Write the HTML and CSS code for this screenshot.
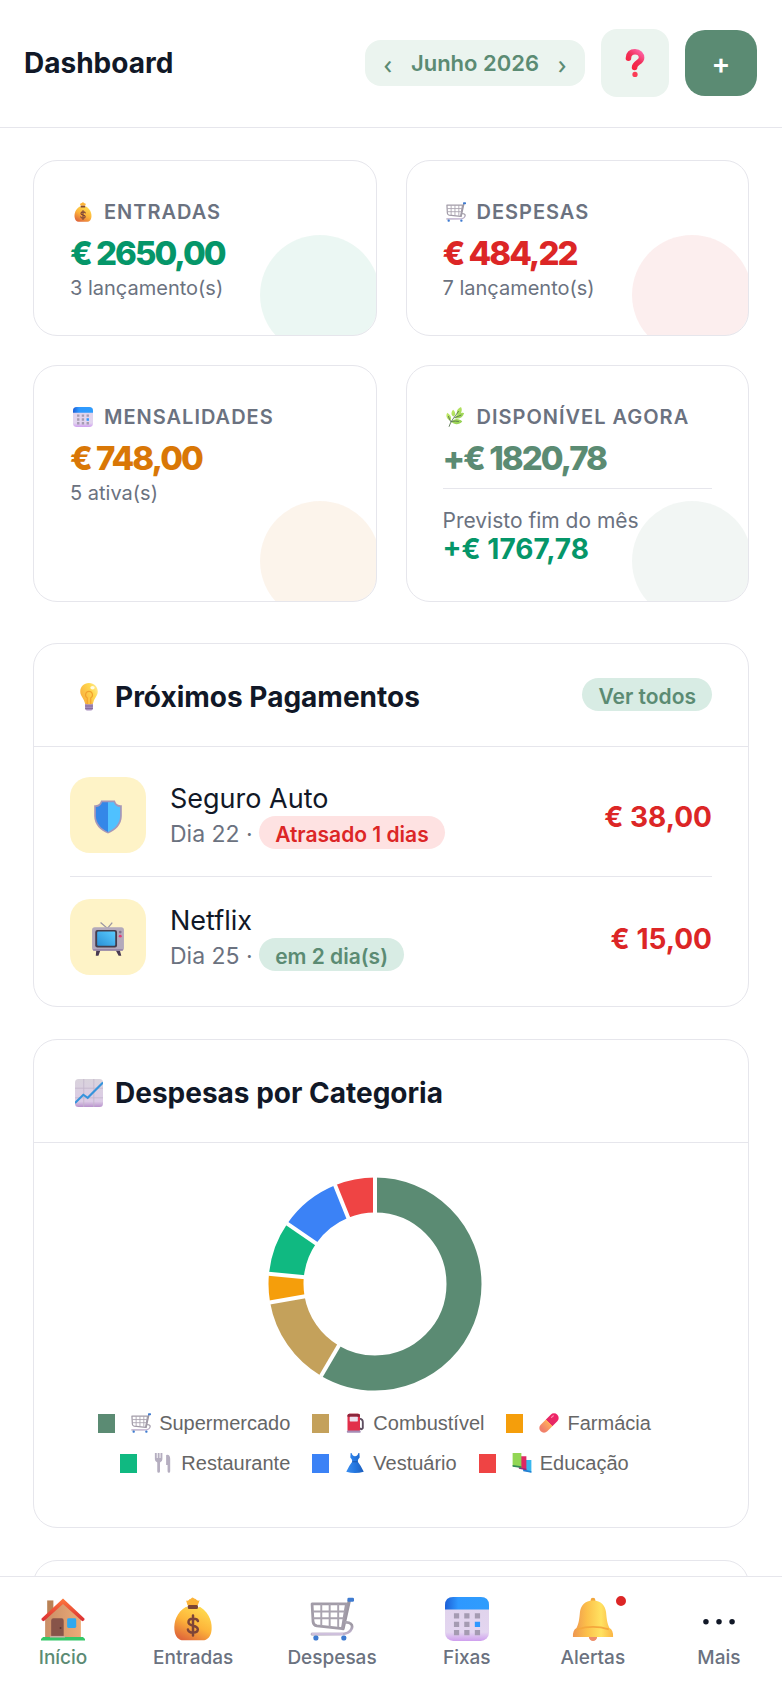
FILE: index.html
```html
<!DOCTYPE html>
<html lang="pt">
<head>
<meta charset="utf-8">
<meta name="viewport" content="width=device-width, initial-scale=1">
<title>Dashboard</title>
<link rel="stylesheet" href="styles.css">
</head>
<body>
<svg class="sprite" aria-hidden="true">
  <defs>
    <linearGradient id="g-gold" x1="0.8" y1="0.1" x2="0.3" y2="1"><stop offset="0" stop-color="#ffd84e"/><stop offset="0.5" stop-color="#fdb43a"/><stop offset="1" stop-color="#e0693a"/></linearGradient>
    <linearGradient id="g-bell" x1="0" y1="0" x2="1" y2="0"><stop offset="0" stop-color="#ee9650"/><stop offset="0.35" stop-color="#fcc04a"/><stop offset="0.7" stop-color="#ffe261"/><stop offset="1" stop-color="#fbb544"/></linearGradient>
    <linearGradient id="g-calhead" x1="0" y1="0" x2="1" y2="0"><stop offset="0" stop-color="#1d5fd6"/><stop offset="0.3" stop-color="#2e98ff"/><stop offset="1" stop-color="#2f9dfc"/></linearGradient>
    <linearGradient id="g-calbody" x1="0" y1="0" x2="0" y2="1"><stop offset="0" stop-color="#dfd3ea"/><stop offset="0.8" stop-color="#e3d5f0"/><stop offset="1" stop-color="#cf9fee"/></linearGradient>
    <linearGradient id="g-wall" x1="0" y1="0" x2="1" y2="0"><stop offset="0" stop-color="#c98e67"/><stop offset="1" stop-color="#ecab77"/></linearGradient>
    <linearGradient id="g-roof" x1="0" y1="0" x2="0" y2="1"><stop offset="0" stop-color="#ff7a3c"/><stop offset="1" stop-color="#da2c33"/></linearGradient>
    <linearGradient id="g-bulb" x1="1" y1="0" x2="0" y2="0.6"><stop offset="0" stop-color="#fff0a8"/><stop offset="0.4" stop-color="#ffd84f"/><stop offset="1" stop-color="#f9b13e"/></linearGradient>
    <linearGradient id="g-question" x1="1" y1="0" x2="0.3" y2="1"><stop offset="0" stop-color="#ff62a5"/><stop offset="0.5" stop-color="#f0305a"/><stop offset="1" stop-color="#f8233e"/></linearGradient>
    <linearGradient id="g-screen" x1="1" y1="0" x2="0" y2="1"><stop offset="0" stop-color="#5acbff"/><stop offset="1" stop-color="#2a90d6"/></linearGradient>
    <linearGradient id="g-leaf" x1="0" y1="0" x2="1" y2="1"><stop offset="0" stop-color="#cdf06a"/><stop offset="1" stop-color="#8ccc52"/></linearGradient>
    <linearGradient id="g-paper" x1="0" y1="0" x2="0" y2="1"><stop offset="0" stop-color="#d9d3dc"/><stop offset="0.8" stop-color="#dccbe6"/><stop offset="1" stop-color="#b892cc"/></linearGradient>
    <linearGradient id="g-metal" x1="0" y1="0" x2="1" y2="1"><stop offset="0" stop-color="#c6c0cb"/><stop offset="0.6" stop-color="#9d98a3"/><stop offset="1" stop-color="#c9b9d8"/></linearGradient>
    <linearGradient id="g-dress" x1="0" y1="0" x2="1" y2="0"><stop offset="0" stop-color="#3b8ef0"/><stop offset="0.5" stop-color="#2477e0"/><stop offset="1" stop-color="#1b5dbb"/></linearGradient>
    <linearGradient id="g-pill" gradientUnits="userSpaceOnUse" x1="26" y1="6" x2="6" y2="26"><stop offset="0" stop-color="#ee2468"/><stop offset="0.48" stop-color="#e32a62"/><stop offset="0.5" stop-color="#ffad5c"/><stop offset="1" stop-color="#f0806a"/></linearGradient>
  </defs>

  <symbol id="i-bag" viewBox="0 0 32 32">
    <path d="M11 7C12 8 20 8 21 7C29 12 30 20 29.500 24C29 29 26.500 31.500 23 31.500H9C5.500 31.500 3 29 2.500 24C2 18 4 11 11 7Z" fill="url(#g-gold)"/>
    <path d="M12 6L11 2.500C12.200 3 13 2.500 13.500 1.500C14.200 1.800 14.700 1 15.500 .4C16.300 .4 17 1.500 18 1.500C19 2.600 19.700 3 20.800 2.400L19.500 6Z" fill="#fdb438"/>
    <rect x="12.200" y="5.800" width="7.400" height="3" rx="1" fill="#7d4533"/>
    <path d="M16 13.500V28M19.600 17.500C19 15.400 12.700 15 12.700 18.400C12.700 21.700 19.500 20 19.500 23.500C19.500 26.700 12.800 26.600 12.300 23.600" fill="none" stroke="#7d4438" stroke-width="1.800" stroke-linecap="round"/>
  </symbol>

  <symbol id="i-cart" viewBox="0 0 32 32">
    <path d="M28.500 3L24 23" fill="none" stroke="#9c96a2" stroke-width="2.400" stroke-linecap="round"/>
    <path d="M25.500 18.500C29 18 31.500 20 30.300 23C29 26.500 25 27 22 27H1.500" fill="none" stroke="url(#g-metal)" stroke-width="2" stroke-linecap="round" stroke-linejoin="round"/>
    <path d="M1.500 5H26.500L23.500 23L5 21Q2.500 20.500 2.200 18Z" fill="none" stroke="#a29ca8" stroke-width="2" stroke-linejoin="round"/>
    <path d="M2 10.500H25.500M2 15.500H24.500M8.200 5V21M14.300 5V22M20.500 5V22" fill="none" stroke="#aaa4b0" stroke-width="1.400"/>
    <path d="M1 26.800H24" stroke="#cfc0dd" stroke-width="1.600"/>
    <rect x="27.200" y=".5" width="4.800" height="3" rx="1" fill="#3f7bd0"/>
    <rect x="2.500" y="28" width="3.600" height="3.600" rx="1.300" fill="#3f7bd0"/>
    <rect x="22.800" y="28" width="3.600" height="3.600" rx="1.300" fill="#3f7bd0"/>
  </symbol>

  <symbol id="i-calendar" viewBox="0 0 32 32">
    <rect width="32" height="32" rx="6" fill="url(#g-calbody)"/>
    <path d="M0 9V6Q0 0 6 0H26Q32 0 32 6V9Z" fill="url(#g-calhead)"/>
    <path d="M6.500 11.800h3.800v3.800h-3.800zM14 11.800h3.800v3.800H14zM21.700 11.800h3.800v3.800h-3.800zM6.500 18h3.800v3.800h-3.800zM14 18h3.800v3.800H14zM6.500 24h3.800v3.800h-3.800zM14 24h3.800v3.800H14zM21.700 24h3.800v3.800h-3.800z" fill="#a59bb2"/>
    <path d="M21.700 18h3.800v3.800h-3.800z" fill="#2e98ff"/>
  </symbol>

  <symbol id="i-herb" viewBox="0 0 32 32">
    <path d="M12 15C7.500 13 8 8 11.500 4.500C15.500 8 16 13 12 15ZM18.500 13C15.500 8 18 2 24 0C27 5 24.500 11 18.500 13ZM7 22C1 20 -1 14 2 9C7 12 10 17.500 7 22ZM14.500 18C17 11 23 8 29 10C27 16.500 21 20 14.500 18ZM9 24C14 17 21 19 26 23C21 29 13 28.500 9 24Z" fill="url(#g-leaf)"/>
    <path d="M5 31C7 23 14 16 20 7M8 24Q5 20 4 15M9 23Q16 22 20 23M14 17Q20 15 24 13" fill="none" stroke="#53704b" stroke-width="1.400" stroke-linecap="round"/>
  </symbol>

  <symbol id="i-bulb" viewBox="0 0 32 32">
    <path d="M11.500 22H20.500V29Q20.500 31.500 16 31.500Q11.500 31.500 11.500 29Z" fill="#a98fc0"/>
    <path d="M11.500 26.300H20.500M11.500 29H20.500" stroke="#7b6592" stroke-width="1"/>
    <path d="M16 0C22 0 26 4.400 26 9.600C26 15 22 17 21 22Q20.800 24.300 18.500 24.300H13.500Q11.200 24.300 11 22C10 17 6 15 6 9.600C6 4.400 10 0 16 0Z" fill="url(#g-bulb)"/>
    <path d="M14 24V17C10.500 15 12 9.500 16 9.500S21.500 15 18 17V24" fill="none" stroke="#f2a02d" stroke-width="1.300"/>
    <ellipse cx="20" cy="5.500" rx="2.500" ry="2" fill="#fffbe5"/>
  </symbol>

  <symbol id="i-shield" viewBox="0 0 32 32">
    <path d="M9.500 .5H22.500C23.500 4 25.500 5 29 5V15C29 23 23 29 16 31.500C9 29 3 23 3 15V5C6.500 5 8.500 4 9.500 .5Z" fill="#a697b8"/>
    <path d="M16 2H10.500C9.500 5 7.500 6.400 4.600 6.500V15C4.600 22 10 27.500 16 30Z" fill="#3487e8"/>
    <path d="M16 2H21.500C22.500 5 24.500 6.400 27.400 6.500V15C27.400 22 22 27.500 16 30Z" fill="#4fc1ff"/>
  </symbol>

  <symbol id="i-tv" viewBox="0 0 32 32">
    <path d="M9 .5L15.500 6L20 .5" fill="none" stroke="#9b95a3" stroke-width="1.200"/>
    <path d="M5 26H9L7 31.800H4.500ZM23 26H27L28.500 31.800H26Z" fill="#493a52"/>
    <rect x="1" y="5" width="30" height="22" rx="2.500" fill="#b3a9bb"/>
    <path d="M2 26.300H30" stroke="#8f7da1" stroke-width="1.300"/>
    <rect x="4" y="7.500" width="20.500" height="16.500" rx="2" fill="#453d4c"/>
    <rect x="5.800" y="9" width="17" height="13.400" rx="1" fill="url(#g-screen)"/>
    <circle cx="27.500" cy="9.500" r="1.300" fill="#83748e"/><circle cx="27.500" cy="13.300" r="1.400" fill="#e33b72"/>
  </symbol>

  <symbol id="i-graph" viewBox="0 0 32 32">
    <rect width="32" height="32" rx="4" fill="url(#g-paper)"/>
    <path d="M10 0V32M21.500 0V32M0 10.500H32M0 21.500H32" stroke="#c4b7cd" stroke-width="1"/>
    <path d="M0 27.500L9.500 18L14.500 21.500L32 4" fill="none" stroke="#3694dc" stroke-width="2.400"/>
  </symbol>

  <symbol id="i-question" viewBox="0 0 32 32">
    <path d="M8.500 10.500C8.500 5.500 11.500 3.200 16 3.200C21 3.200 23.500 6.500 23.500 10C23.500 15.500 15.500 15.500 15.500 21" fill="none" stroke="url(#g-question)" stroke-width="6.400" stroke-linecap="round"/>
    <circle cx="16" cy="29" r="3" fill="#fb3b55"/>
  </symbol>

  <symbol id="i-house" viewBox="0 0 32 32">
    <path d="M4.500 2.500H9V14H4.500Z" fill="#b98154"/>
    <path d="M3 15L16 3L29 15V30H3Z" fill="url(#g-wall)"/>
    <path d="M0 30.500L1.500 29H30.500L32 30.500V31.600H0Z" fill="#35c768"/>
    <path d="M16 1L31.600 15.700Q32 17.300 30 17.700L16 5L2 17.700Q0 17.300 .4 15.700Z" fill="url(#g-roof)"/>
    <path d="M7.400 29V17.300Q7.400 15.500 9 15.500H15Q16.500 15.500 16.500 17.300V29Z" fill="#875449"/>
    <circle cx="14.200" cy="22.500" r=".7" fill="#5c302c"/>
    <path d="M6.500 28.300H17.500V29.500H6.500Z" fill="#c6aea3"/>
    <rect x="19" y="15.500" width="6.600" height="7" rx="1" fill="#31a8ed"/>
  </symbol>

  <symbol id="i-bell" viewBox="0 0 32 32">
    <circle cx="16" cy="29" r="3" fill="#ed8d68"/>
    <rect x="14.300" y=".5" width="3.400" height="5" rx="1.700" fill="#f2a63b"/>
    <path d="M16 2.500C22 2.500 25 6.500 25.500 11C26 16 26.300 19 28 22.500Q30.800 24 30.600 29H1.400Q1.200 24 4 22.500C5.700 19 6 16 6.500 11C7 6.500 10 2.500 16 2.500Z" fill="url(#g-bell)"/>
    <path d="M4.500 23.500Q16 20 27.500 23.500" fill="none" stroke="#f5a83d" stroke-width="1.300"/>
  </symbol>

  <symbol id="i-dots" viewBox="0 0 32 32">
    <circle cx="6.500" cy="18" r="2" fill="#111827"/><circle cx="16" cy="18" r="2" fill="#111827"/><circle cx="25.500" cy="18" r="2" fill="#111827"/>
  </symbol>

  <symbol id="i-fuel" viewBox="0 0 32 32">
    <path d="M23 9Q29 10 28.500 15V24Q26 28 24 24" fill="none" stroke="#5d4d60" stroke-width="3"/>
    <rect x="4" y="1" width="20" height="29" rx="3" fill="#e22f4a"/>
    <path d="M4 4Q4 1 7 1H21Q24 1 24 4V6H4Z" fill="#8a263c"/>
    <rect x="7.500" y="6" width="13" height="7.500" rx="1" fill="#ece2ef"/>
    <rect x="3" y="28" width="22" height="3.500" rx="1" fill="#a58cb5"/>
  </symbol>

  <symbol id="i-pill" viewBox="0 0 32 32">
    <path d="M8 24L24 8" stroke="url(#g-pill)" stroke-width="15" stroke-linecap="round"/>
    <path d="M20 7L23 4.500" stroke="#ff86ac" stroke-width="2" stroke-linecap="round"/>
  </symbol>

  <symbol id="i-cutlery" viewBox="0 0 32 32">
    <path d="M3 0H6V8H7.500V0H10.500V8H12V0H15V10Q15 14 11.200 15V29Q11.200 31.500 9 31.500T6.800 29V15Q3 14 3 10ZM21 3Q27 1 27.500 9V29Q27.500 31.500 25.500 31.500T23.300 29V19H21Z" fill="#b5aec0"/>
  </symbol>

  <symbol id="i-dress" viewBox="0 0 32 32">
    <path d="M9 0H10.500Q11.500 5 16 5Q20.500 5 21.500 0H23L23.500 7Q20 10 20.500 14Q26 21 30 30Q16 34 2 30Q6 21 11.500 14Q12 10 8.500 7Z" fill="url(#g-dress)"/>
    <path d="M11.500 14H20.500" stroke="#1855ae" stroke-width="1.500"/>
  </symbol>

  <symbol id="i-books" viewBox="0 0 32 32">
    <path d="M18 11H31V31L18 28Z" fill="#39b8ef"/><path d="M18 26L31 29V31.500L18 29Z" fill="#237fd2"/>
    <path d="M11 5H23V27L11 24Z" fill="#df2964"/><path d="M11 23L23 25V27.500L11 25Z" fill="#8b2d86"/>
    <path d="M1 0H15V23L1 21Z" fill="#92d654"/><path d="M1 19L15 21V24L1 22Z" fill="#368b57"/>
  </symbol>
</svg>

<div class="app">
  <header class="topbar">
    <h1 class="topbar-title">Dashboard</h1>
    <div class="month">
      <button class="month-step" type="button" aria-label="Mês anterior">‹</button>
      <span>Junho 2026</span>
      <button class="month-step" type="button" aria-label="Mês seguinte">›</button>
    </div>
    <button class="help" type="button" aria-label="Ajuda"><svg class="ico-title"><use href="#i-question"/></svg></button>
    <button class="add" type="button" aria-label="Adicionar">+</button>
  </header>

  <main class="content">
    <section class="stats">
      <article class="stat stat-income">
        <h2 class="stat-label"><svg class="ico-small"><use href="#i-bag"/></svg>Entradas</h2>
        <p class="stat-value">€ 2650,00</p>
        <p class="stat-note">3 lançamento(s)</p>
      </article>
      <article class="stat stat-expense">
        <h2 class="stat-label"><svg class="ico-small"><use href="#i-cart"/></svg>Despesas</h2>
        <p class="stat-value">€ 484,22</p>
        <p class="stat-note">7 lançamento(s)</p>
      </article>
      <article class="stat stat-monthly">
        <h2 class="stat-label"><svg class="ico-small"><use href="#i-calendar"/></svg>Mensalidades</h2>
        <p class="stat-value">€ 748,00</p>
        <p class="stat-note">5 ativa(s)</p>
      </article>
      <article class="stat stat-balance">
        <h2 class="stat-label"><svg class="ico-small"><use href="#i-herb"/></svg>Disponível agora</h2>
        <p class="stat-value">+€ 1820,78</p>
        <div class="forecast">
          <p class="forecast-label">Previsto fim do mês</p>
          <p class="forecast-value">+€ 1767,78</p>
        </div>
      </article>
    </section>

    <section class="panel">
      <div class="panel-head">
        <h2 class="panel-title"><svg class="ico-title"><use href="#i-bulb"/></svg>Próximos Pagamentos</h2>
        <button class="badge badge-green" type="button">Ver todos</button>
      </div>
      <ul class="payments">
        <li class="payment">
          <span class="tile"><svg class="ico-tile"><use href="#i-shield"/></svg></span>
          <div class="payment-text">
            <p class="payment-name">Seguro Auto</p>
            <p class="payment-meta">Dia 22 · <span class="badge badge-red">Atrasado 1 dias</span></p>
          </div>
          <span class="amount">€ 38,00</span>
        </li>
        <li class="payment">
          <span class="tile"><svg class="ico-tile"><use href="#i-tv"/></svg></span>
          <div class="payment-text">
            <p class="payment-name">Netflix</p>
            <p class="payment-meta">Dia 25 · <span class="badge badge-green">em 2 dia(s)</span></p>
          </div>
          <span class="amount">€ 15,00</span>
        </li>
      </ul>
    </section>

    <section class="panel">
      <div class="panel-head">
        <h2 class="panel-title"><svg class="ico-title"><use href="#i-graph"/></svg>Despesas por Categoria</h2>
      </div>
      <div class="chart">
        <svg class="donut" viewBox="-107 -107 214 214" role="img" aria-label="Despesas por categoria">
          <g fill="none" stroke-width="35" transform="rotate(-90)">
            <circle r="89" pathLength="360" stroke="#5b8b73" stroke-dasharray="210.400 360"/>
            <circle r="89" pathLength="360" stroke="#c4a15b" stroke-dasharray="49.600 360" stroke-dashoffset="-210.400"/>
            <circle r="89" pathLength="360" stroke="#f59e0b" stroke-dasharray="15.500 360" stroke-dashoffset="-260"/>
            <circle r="89" pathLength="360" stroke="#10b981" stroke-dasharray="29 360" stroke-dashoffset="-275.500"/>
            <circle r="89" pathLength="360" stroke="#3b82f6" stroke-dasharray="33.500 360" stroke-dashoffset="-304.500"/>
            <circle r="89" pathLength="360" stroke="#ef4444" stroke-dasharray="22 360" stroke-dashoffset="-338"/>
          </g>
          <g stroke="#ffffff" stroke-width="4">
            <path d="M0 -65V-107"/>
            <path d="M0 -65V-107" transform="rotate(210.400)"/>
            <path d="M0 -65V-107" transform="rotate(260)"/>
            <path d="M0 -65V-107" transform="rotate(275.500)"/>
            <path d="M0 -65V-107" transform="rotate(304.500)"/>
            <path d="M0 -65V-107" transform="rotate(338)"/>
          </g>
        </svg>
        <ul class="legend">
          <li class="legend-item"><span class="swatch swatch-sage"></span><svg class="ico-small"><use href="#i-cart"/></svg>Supermercado</li>
          <li class="legend-item"><span class="swatch swatch-tan"></span><svg class="ico-small"><use href="#i-fuel"/></svg>Combustível</li>
          <li class="legend-item"><span class="swatch swatch-amber"></span><svg class="ico-small"><use href="#i-pill"/></svg>Farmácia</li>
          <li class="legend-item"><span class="swatch swatch-emerald"></span><svg class="ico-small"><use href="#i-cutlery"/></svg>Restaurante</li>
          <li class="legend-item"><span class="swatch swatch-blue"></span><svg class="ico-small"><use href="#i-dress"/></svg>Vestuário</li>
          <li class="legend-item"><span class="swatch swatch-red"></span><svg class="ico-small"><use href="#i-books"/></svg>Educação</li>
        </ul>
      </div>
    </section>

    <section class="panel panel-next"></section>
  </main>

  <nav class="tabs" aria-label="Principal">
    <a class="tab tab-active" href="#inicio"><svg class="ico-tab"><use href="#i-house"/></svg>Início</a>
    <a class="tab" href="#entradas"><svg class="ico-tab"><use href="#i-bag"/></svg>Entradas</a>
    <a class="tab" href="#despesas"><svg class="ico-tab"><use href="#i-cart"/></svg>Despesas</a>
    <a class="tab" href="#fixas"><svg class="ico-tab"><use href="#i-calendar"/></svg>Fixas</a>
    <a class="tab" href="#alertas"><svg class="ico-tab"><use href="#i-bell"/></svg><span class="dot"></span>Alertas</a>
    <a class="tab" href="#mais"><svg class="ico-tab"><use href="#i-dots"/></svg>Mais</a>
  </nav>
</div>
</body>
</html>
```
FILE: styles.css
```css
:root {
  --sage: #5b8b73;
  --ink: #111827;
  --muted: #6b7280;
  --line: #e6e6ec;
  --red: #dc2626;
  --green: #059669;
  --amber: #d97706;
  --mint: #ebf4ef;
}

* {
  box-sizing: border-box;
}

body {
  margin: 0;
  background: #ffffff;
  color: var(--ink);
  font-family: Inter, "Liberation Sans", sans-serif;
}

h1, h2, p, ul {
  margin: 0;
  padding: 0;
}

ul {
  list-style: none;
}

button {
  border: 0;
  font-family: inherit;
  cursor: pointer;
}

.sprite {
  position: absolute;
  width: 0;
  height: 0;
}

.app {
  display: flex;
  flex-direction: column;
  height: 100vh;
}

/* Icons */
.ico-small { flex: none; width: 20px; height: 20px; }
.ico-title { flex: none; width: 28px; height: 28px; }
.ico-tile { width: 34px; height: 34px; }
.ico-tab { width: 44px; height: 44px; }

/* Top bar */
.topbar {
  display: flex;
  align-items: center;
  flex: none;
  gap: 16px;
  padding: 29px 25px 30px 24px;
  border-bottom: 1px solid var(--line);
}

.topbar-title {
  flex: 1;
  font-size: 28px;
  line-height: 34px;
  font-weight: 700;
}

.month {
  display: flex;
  align-items: center;
  gap: 16px;
  height: 46px;
  padding: 0 16px;
  border-radius: 16px;
  background: var(--mint);
  color: var(--sage);
  font-size: 22px;
  font-weight: 600;
}

.month-step {
  width: 14px;
  padding: 0;
  background: none;
  color: inherit;
  font-family: "Noto Sans", sans-serif;
  font-size: 28px;
  line-height: 28px;
}

.help {
  display: flex;
  align-items: center;
  justify-content: center;
  width: 68px;
  height: 68px;
  padding: 0;
  border-radius: 16px;
  background: var(--mint);
}

.add {
  width: 72px;
  height: 66px;
  padding: 2px 0 0;
  border-radius: 20px;
  background: var(--sage);
  color: #ffffff;
  font-size: 28px;
  font-weight: 600;
}

/* Content */
.content {
  display: flex;
  flex-direction: column;
  flex: 1;
  gap: 32px;
  min-height: 0;
  padding: 32px 33px;
  overflow-y: auto;
  scrollbar-width: none;
}

.stats {
  display: grid;
  flex: none;
  grid-template-columns: 1fr 1fr;
  gap: 29px;
  margin-bottom: 9px;
}

.stat {
  position: relative;
  padding: 36px 36px 33px;
  border: 1px solid var(--line);
  border-radius: 24px;
  overflow: hidden;
}

.stat::after {
  content: "";
  position: absolute;
  right: -4px;
  bottom: -20px;
  width: 120px;
  height: 120px;
  border-radius: 50%;
  background: currentColor;
  opacity: 0.08;
}

.stat-income { color: var(--green); }
.stat-expense { color: var(--red); }
.stat-monthly { color: var(--amber); }
.stat-balance { color: var(--sage); }

.stat-label {
  display: flex;
  align-items: center;
  gap: 11px;
  padding-left: 3px;
  color: var(--muted);
  font-size: 20px;
  line-height: 30px;
  font-weight: 600;
  letter-spacing: 1px;
  text-transform: uppercase;
}

.stat-value {
  margin-top: 7px;
  font-size: 33px;
  line-height: 38px;
  font-weight: 800;
  letter-spacing: -2px;
}

.stat-note {
  margin-top: 2px;
  color: var(--muted);
  font-size: 20px;
  line-height: 28px;
}

.forecast {
  margin-top: 11px;
  padding: 18px 0 5px;
  border-top: 1px solid var(--line);
}

.forecast-label {
  color: var(--muted);
  font-size: 21px;
  line-height: 28px;
}

.forecast-value {
  color: var(--green);
  font-size: 28px;
  line-height: 28px;
  font-weight: 700;
}

/* Panels */
.panel {
  flex: none;
  border: 1px solid var(--line);
  border-radius: 24px;
}

.panel-next {
  height: 320px;
}

.panel-head {
  display: flex;
  align-items: flex-start;
  justify-content: space-between;
  padding: 34px 36px 30px;
  border-bottom: 1px solid var(--line);
}

.panel-title {
  display: flex;
  align-items: center;
  gap: 12px;
  padding-left: 5px;
  font-size: 28px;
  line-height: 38px;
  font-weight: 700;
}

.badge {
  display: inline-block;
  padding: 7px 16px 2px;
  border-radius: 17px;
  font-size: 21px;
  line-height: 24px;
  font-weight: 600;
}

.badge-green {
  background: #d8ece4;
  color: var(--sage);
}

.badge-red {
  background: #fee2e2;
  color: var(--red);
}

.payments {
  padding: 30px 36px 31px;
}

.payment {
  display: flex;
  align-items: center;
  gap: 24px;
}

.payment + .payment {
  margin-top: 23px;
  padding-top: 22px;
  border-top: 1px solid var(--line);
}

.tile {
  display: flex;
  align-items: center;
  justify-content: center;
  flex: none;
  width: 76px;
  height: 76px;
  padding-top: 4px;
  border-radius: 20px;
  background: #fef3c7;
}

.payment-text {
  flex: 1;
}

.payment-name {
  font-size: 27px;
  line-height: 34px;
}

.payment-meta {
  color: var(--muted);
  font-size: 23px;
  line-height: 30px;
}

.amount {
  padding-top: 3px;
  color: var(--red);
  font-size: 28px;
  line-height: 34px;
  font-weight: 700;
}

/* Category chart */
.chart {
  display: flex;
  flex-direction: column;
  align-items: center;
  gap: 20px;
  padding: 34px 69px 52px 36px;
}

.donut {
  width: 214px;
  height: 214px;
}

.legend {
  display: flex;
  flex-wrap: wrap;
  justify-content: center;
  gap: 16px 22px;
  color: #666666;
  font-family: "Liberation Sans", Arial, sans-serif;
  font-size: 20px;
  line-height: 24px;
}

.legend-item {
  display: flex;
  align-items: center;
  gap: 8px;
}

.swatch {
  width: 17px;
  height: 19px;
  margin-right: 8px;
}

.swatch-sage { background: #5b8b73; }
.swatch-tan { background: #c4a15b; }
.swatch-amber { background: #f59e0b; }
.swatch-emerald { background: #10b981; }
.swatch-blue { background: #3b82f6; }
.swatch-red { background: #ef4444; }

/* Bottom tabs */
.tabs {
  display: flex;
  justify-content: space-around;
  flex: none;
  padding: 20px 0 18px;
  border-top: 1px solid var(--line);
  background: #ffffff;
}

.tab {
  position: relative;
  display: flex;
  flex-direction: column;
  align-items: center;
  gap: 5px;
  min-width: 72px;
  color: var(--muted);
  font-size: 19px;
  line-height: 24px;
  font-weight: 500;
  text-decoration: none;
}

.tab-active {
  color: var(--sage);
}

.dot {
  position: absolute;
  top: -4px;
  right: 0;
  width: 16px;
  height: 16px;
  border: 3px solid #ffffff;
  border-radius: 50%;
  background: var(--red);
}
```
